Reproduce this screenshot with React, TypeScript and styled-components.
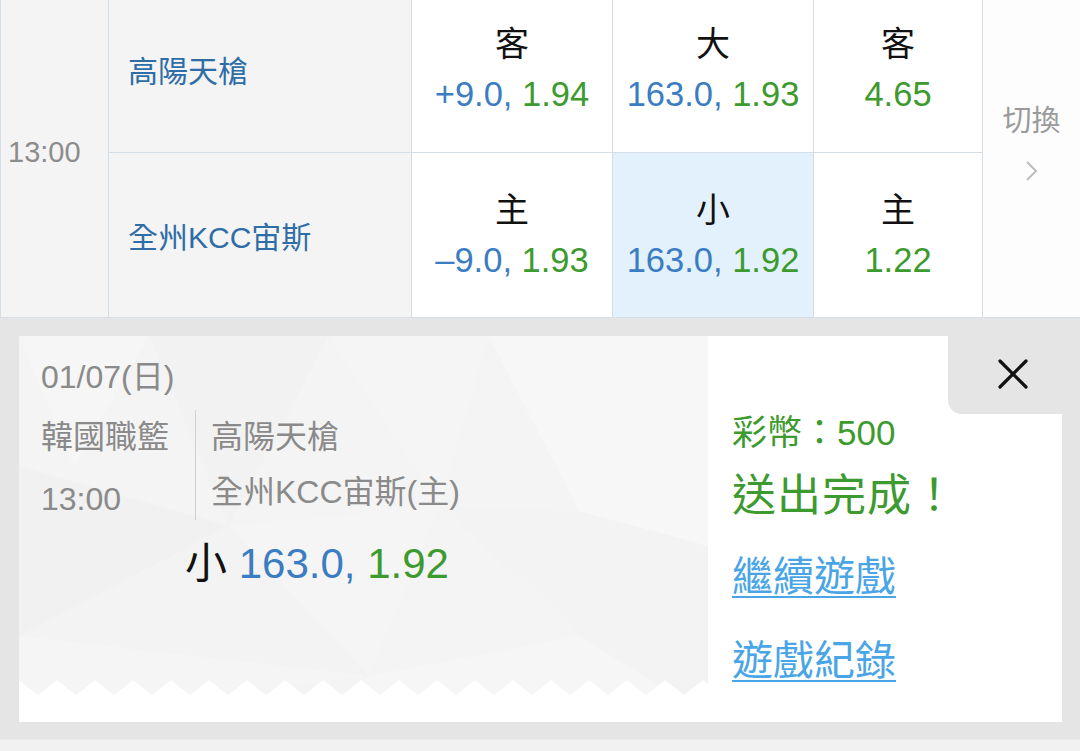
import React from "react";
import styled, { createGlobalStyle } from "styled-components";

const GlobalStyle = createGlobalStyle`
  html, body { margin: 0; padding: 0; background: #fff; }
  body {
    font-family: "Liberation Sans", "Noto Sans CJK TC", sans-serif;
    overflow: hidden;
  }
  * { box-sizing: border-box; }
`;

const LINE = "#d5dde6";
const BLUE = "#3a7dc2";
const GREEN = "#3d9a2e";

const Page = styled.div`
  width: 1080px;
  height: 751px;
  overflow: hidden;
  display: flex;
  flex-direction: column;
  background: #fff;
`;

const Table = styled.div`
  display: grid;
  grid-template-columns: 108px 303px 201px 201px 169px 1fr;
  grid-template-rows: 167px 165px;
  margin-top: -14px;
  border-left: 1px solid ${LINE};
  flex-shrink: 0;
`;

const TimeCell = styled.div`
  grid-row: span 2;
  display: flex;
  align-items: center;
  padding-left: 7px;
  padding-top: 2px;
  background: #f4f4f4;
  border-right: 1px solid ${LINE};
  border-bottom: 1px solid ${LINE};
  color: #8c8c8c;
  font-size: 29px;
`;

const TeamCell = styled.div`
  display: flex;
  align-items: center;
  padding-left: 19px;
  background: #f4f4f4;
  border-right: 1px solid ${LINE};
  border-bottom: 1px solid ${LINE};
  color: #2f6da6;
  font-size: 30px;
`;

const OddsCell = styled.div<{ $selected?: boolean }>`
  display: flex;
  flex-direction: column;
  align-items: center;
  justify-content: center;
  background: ${(p) => (p.$selected ? "#e2f1fb" : "#fff")};
  border-right: 1px solid ${LINE};
  border-bottom: 1px solid ${LINE};
  font-size: 34px;
  line-height: 50px;
`;

const OddsLabel = styled.div`
  color: #111;
`;

const OddsValue = styled.div`
  white-space: nowrap;
  font-size: 34.5px;
`;

const Blue = styled.span`
  color: ${BLUE};
`;

const Green = styled.span`
  color: ${GREEN};
`;

const SwitchCell = styled.div`
  grid-row: span 2;
  display: flex;
  flex-direction: column;
  align-items: center;
  justify-content: center;
  gap: 19px;
  padding-bottom: 20px;
  background: #fdfdfd;
  border-bottom: 1px solid ${LINE};
`;

const SwitchText = styled.div`
  font-size: 29px;
  line-height: 40px;
  color: #9a9a9a;
`;

const Overlay = styled.div`
  background: #e5e5e5;
  padding: 18px 18px 17px 19px;
  height: 421px;
  flex-shrink: 0;
`;

const Card = styled.div`
  position: relative;
  display: flex;
  height: 386px;
  background: #fff;
`;

const LeftPanel = styled.div`
  position: relative;
  width: 689px;
  flex-shrink: 0;
  padding: 21px 0 0 22px;
  color: #8a8a8a;
  font-size: 32px;
`;

const Texture = styled.svg`
  position: absolute;
  left: 0;
  top: 0;
  z-index: 0;
`;

const LeftContent = styled.div`
  position: relative;
  z-index: 1;
`;

const DateLine = styled.div`
  line-height: 40px;
`;

const InfoRow = styled.div`
  display: flex;
  align-items: flex-start;
  margin-top: 9px;
`;

const LeagueCol = styled.div`
  width: 154px;
  line-height: 62px;
`;

const TeamsCol = styled.div`
  margin-top: 4px;
  border-left: 1px solid #d0d0d0;
  padding-left: 15px;
  line-height: 55px;
`;

const BetLine = styled.div`
  margin: 9px 0 0 144px;
  font-size: 42px;
  line-height: 50px;
  white-space: nowrap;
`;

const BetSide = styled.span`
  color: #111;
`;

const RightPanel = styled.div`
  flex: 1;
  display: flex;
  flex-direction: column;
  align-items: flex-start;
  padding: 75px 0 0 24px;
`;

const Coins = styled.div`
  color: ${GREEN};
  font-size: 35px;
  line-height: 44px;
`;

const Done = styled.div`
  color: ${GREEN};
  font-size: 44px;
  line-height: 56px;
  letter-spacing: 1px;
  margin-top: 13px;
`;

const LinkText = styled.a<{ $gap: number }>`
  display: block;
  margin-top: ${(p) => p.$gap}px;
  color: #4aa5e6;
  font-size: 41px;
  line-height: 50px;
  text-decoration: underline;
  text-decoration-thickness: 2px;
  text-underline-offset: 5px;
  cursor: pointer;
`;

const CloseTab = styled.div`
  position: absolute;
  top: 0;
  right: 0;
  width: 114px;
  height: 78px;
  background: #e5e5e5;
  border-bottom-left-radius: 14px;
  display: flex;
  align-items: center;
  justify-content: center;
  padding-left: 16px;
  padding-bottom: 2px;
`;

const BottomStrip = styled.div`
  flex: 1;
  background: #f1f1f1;
  border-top: 1px solid #ebebeb;
`;

const Chevron = () => (
  <svg width="14" height="22" viewBox="0 0 14 22">
    <polyline points="2,2 11,11 2,20" fill="none" stroke="#bdbdbd" strokeWidth="2" />
  </svg>
);

const CloseIcon = () => (
  <svg width="30" height="30" viewBox="0 0 30 30">
    <line x1="2" y1="2" x2="28" y2="28" stroke="#111" strokeWidth="3.2" strokeLinecap="round" />
    <line x1="28" y1="2" x2="2" y2="28" stroke="#111" strokeWidth="3.2" strokeLinecap="round" />
  </svg>
);

const zig = (() => {
  const top = 344;
  const bottom = 359;
  const pts2: string[] = [];
  for (let x = 0; x <= 700; x += 38) {
    pts2.push(`${x},${top}`);
    pts2.push(`${x + 19},${bottom}`);
  }
  pts2.reverse();
  return ["0,0", "689,0", `689,${top}`, ...pts2].join(" ");
})();

const PanelTexture = () => (
  <Texture width="689" height="386" viewBox="0 0 689 386">
    <defs>
      <clipPath id="zz">
        <polygon points={zig} />
      </clipPath>
    </defs>
    <g clipPath="url(#zz)">
      <rect x="0" y="0" width="689" height="386" fill="#f4f4f4" />
      <polygon points="0,0 130,0 55,130" fill="#f6f6f6" />
      <polygon points="130,0 310,0 210,190" fill="#f2f2f2" />
      <polygon points="310,0 470,0 420,170" fill="#f5f5f5" />
      <polygon points="470,0 689,0 689,210 560,175" fill="#f7f7f7" />
      <polygon points="0,130 210,190 0,300" fill="#f1f1f1" />
      <polygon points="210,190 420,170 350,340" fill="#f5f5f5" />
      <polygon points="420,170 560,175 689,210 689,380 560,300" fill="#f3f3f3" />
      <polygon points="0,300 350,340 0,386" fill="#f5f5f5" />
      <polygon points="350,340 560,300 689,380 689,386 300,386" fill="#f6f6f6" />
      <polygon points="210,190 350,340 0,300" fill="#f3f3f3" />
    </g>
  </Texture>
);

type Row = {
  team: string;
  spread: { label: string; line: string; odds: string };
  total: { label: string; line: string; odds: string; selected?: boolean };
  money: { label: string; odds: string };
};

const rows: Row[] = [
  {
    team: "高陽天槍",
    spread: { label: "客", line: "+9.0,", odds: "1.94" },
    total: { label: "大", line: "163.0,", odds: "1.93" },
    money: { label: "客", odds: "4.65" },
  },
  {
    team: "全州KCC宙斯",
    spread: { label: "主", line: "\u20139.0,", odds: "1.93" },
    total: { label: "小", line: "163.0,", odds: "1.92", selected: true },
    money: { label: "主", odds: "1.22" },
  },
];

export default function App() {
  return (
    <>
      <GlobalStyle />
      <Page>
        <Table>
          <TimeCell>13:00</TimeCell>
          {rows.map((r, i) => (
            <React.Fragment key={r.team}>
              <TeamCell>{r.team}</TeamCell>
              <OddsCell>
                <OddsLabel>{r.spread.label}</OddsLabel>
                <OddsValue>
                  <Blue>{r.spread.line}</Blue> <Green>{r.spread.odds}</Green>
                </OddsValue>
              </OddsCell>
              <OddsCell $selected={r.total.selected}>
                <OddsLabel>{r.total.label}</OddsLabel>
                <OddsValue>
                  <Blue>{r.total.line}</Blue> <Green>{r.total.odds}</Green>
                </OddsValue>
              </OddsCell>
              <OddsCell>
                <OddsLabel>{r.money.label}</OddsLabel>
                <OddsValue>
                  <Green>{r.money.odds}</Green>
                </OddsValue>
              </OddsCell>
              {i === 0 && (
                <SwitchCell>
                  <SwitchText>切換</SwitchText>
                  <Chevron />
                </SwitchCell>
              )}
            </React.Fragment>
          ))}
        </Table>
        <Overlay>
          <Card>
            <LeftPanel>
              <PanelTexture />
              <LeftContent>
                <DateLine>01/07(日)</DateLine>
                <InfoRow>
                  <LeagueCol>
                    <div>韓國職籃</div>
                    <div>13:00</div>
                  </LeagueCol>
                  <TeamsCol>
                    <div>高陽天槍</div>
                    <div>全州KCC宙斯(主)</div>
                  </TeamsCol>
                </InfoRow>
                <BetLine>
                  <BetSide>小</BetSide> <Blue>163.0,</Blue> <Green>1.92</Green>
                </BetLine>
              </LeftContent>
            </LeftPanel>
            <RightPanel>
              <Coins>彩幣：500</Coins>
              <Done>送出完成！</Done>
              <LinkText $gap={28}>繼續遊戲</LinkText>
              <LinkText $gap={34}>遊戲紀錄</LinkText>
            </RightPanel>
            <CloseTab>
              <CloseIcon />
            </CloseTab>
          </Card>
        </Overlay>
        <BottomStrip />
      </Page>
    </>
  );
}
